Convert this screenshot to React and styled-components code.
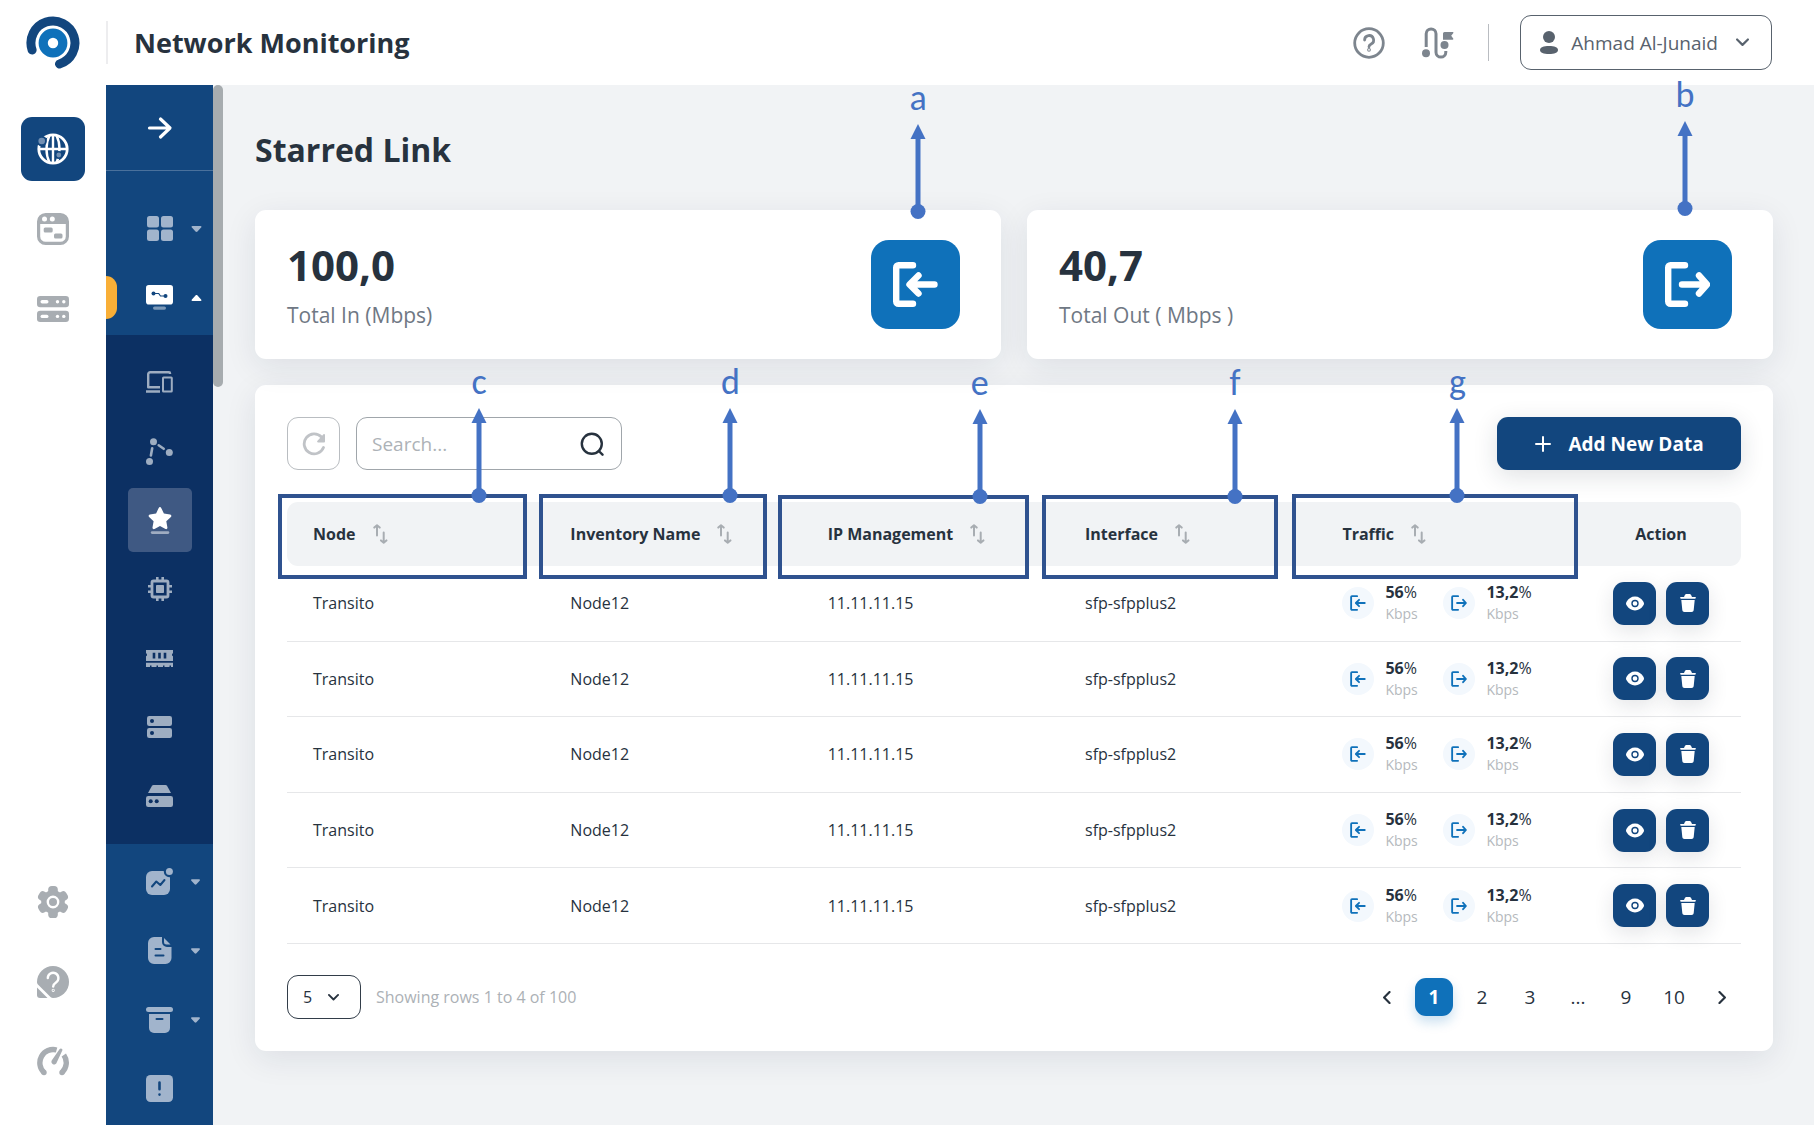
import React, { useState } from 'react'
import styled, { createGlobalStyle, css } from 'styled-components'

const colors = {
  navy: '#12467e',
  deep: '#0c3063',
  blue: '#0f71ba',
  page: '#f1f3f5',
  ink: '#27323e',
  muted: '#6f7884',
  faint: '#a8adb2',
  navIcon: '#a1b4cc',
  subIcon: '#9eadc1',
  marker: '#4472c4',
  frame: '#2f528f',
}

const GlobalStyle = createGlobalStyle`
  *, *::before, *::after {
    box-sizing: border-box;
  }
  body {
    margin: 0;
    background: ${colors.page};
    color: ${colors.ink};
    font-family: 'Open Sans', 'Noto Sans', sans-serif;
    font-size: 16px;
  }
  button, input, select {
    font: inherit;
    color: inherit;
  }
  button {
    border: 0;
    padding: 0;
    background: none;
    cursor: pointer;
  }
  svg {
    display: block;
    flex: none;
  }
`

/* layout */

const Page = styled.div`
  display: flex;
  flex-direction: column;
  min-height: 100vh;
`

const Header = styled.header`
  display: flex;
  align-items: center;
  height: 85px;
  padding-right: 42px;
  background: #fff;
`

const LogoLink = styled.a`
  display: flex;
  justify-content: center;
  width: 106px;
`

const AppName = styled.h1`
  display: flex;
  align-items: center;
  height: 43px;
  margin: 0 auto 0 0;
  padding-left: 26px;
  border-left: 2px solid #ededef;
  font-size: 27px;
  font-weight: 700;
`

const HeaderTools = styled.div`
  display: flex;
  align-items: center;
  gap: 37px;
  color: #7d858e;
`

const UserButton = styled.button`
  display: flex;
  align-items: center;
  height: 55px;
  padding: 0 22px 0 19px;
  margin-left: 31px;
  border: 1px solid #58626d;
  border-radius: 11px;
  color: #58626d;
  font-size: 19px;

  span {
    margin: 0 18px 0 13px;
  }
`

const Divider = styled.i`
  width: 1px;
  height: 37px;
  margin-left: 34px;
  background: #b9bcc1;
`

const Body = styled.div`
  display: flex;
  flex: 1;
`

const Rail = styled.nav`
  display: flex;
  flex-direction: column;
  align-items: center;
  gap: 16px;
  width: 106px;
  padding: 32px 0 31px;
  background: #fff;
`

const RailButton = styled.button`
  display: grid;
  place-items: center;
  width: 64px;
  height: 64px;
  border-radius: 11px;
  color: ${(props) => (props.$active ? '#fff' : colors.faint)};
  background: ${(props) => (props.$active ? colors.navy : 'none')};
`

const RailSpacer = styled.div`
  flex: 1;
`

const Nav = styled.nav`
  width: 107px;
  background: ${colors.navy};
`

const ExpandButton = styled.button`
  display: grid;
  place-items: center;
  width: 100%;
  height: 86px;
  border-bottom: 1px solid #4a719c;
`

const NavGroup = styled.div`
  padding-top: ${(props) => (props.$first ? '23px' : '3px')};
  padding-bottom: ${(props) => (props.$first ? '3px' : '0')};
`

const NavButton = styled.button`
  display: grid;
  grid-template-columns: 40px 27px 1fr;
  align-items: center;
  width: 100%;
  height: 69px;
  color: ${(props) => (props.$active ? '#fff' : colors.navIcon)};

  svg {
    justify-self: center;
  }
  svg + svg {
    justify-self: start;
    margin-left: 18px;
  }
`

const ActiveMark = styled.i`
  width: 11px;
  height: 43px;
  border-radius: 0 11px 11px 0;
  background: ${(props) => (props.$on ? '#f9af37' : 'none')};
`

const SubNav = styled.div`
  display: flex;
  flex-direction: column;
  align-items: center;
  gap: 5px;
  padding: 15px 0 16px;
  background: ${colors.deep};
`

const SubButton = styled.button`
  display: grid;
  place-items: center;
  width: 64px;
  height: 64px;
  border-radius: 5px;
  color: ${(props) => (props.$active ? '#fff' : colors.subIcon)};
  background: ${(props) => (props.$active ? '#3f5983' : 'none')};
`

const ScrollTrack = styled.div`
  width: 10px;
`

const ScrollThumb = styled.div`
  width: 10px;
  height: 302px;
  border-radius: 5px;
  background: #a7acaf;
`

const Main = styled.main`
  flex: 1;
  min-width: 0;
  padding: 41px 41px 41px 32px;
`

const PageTitle = styled.h2`
  margin: 0 0 36px;
  font-size: 32px;
  line-height: 48px;
  font-weight: 700;
`

const Surface = styled.section`
  border-radius: 11px;
  background: #fff;
  box-shadow: 0 8px 32px rgba(24, 36, 64, 0.09);
`

const Cards = styled.div`
  display: grid;
  grid-template-columns: 1fr 1fr;
  gap: 26px;
  margin-bottom: 26px;
`

const Card = styled(Surface)`
  position: relative;
  display: flex;
  align-items: center;
  justify-content: space-between;
  height: 149px;
  padding: 0 41px 0 32px;
`

const Figure = styled.strong`
  display: block;
  font-size: 42px;
  line-height: 56px;
`

const Caption = styled.span`
  display: block;
  margin-top: 4px;
  color: ${colors.muted};
  font-size: 21px;
  line-height: 36px;
`

const CardIcon = styled.div`
  display: grid;
  place-items: center;
  width: 89px;
  height: 89px;
  border-radius: 18px;
  color: #fff;
  background: ${colors.blue};
`

const Panel = styled(Surface)`
  padding: 32px;
`

const Toolbar = styled.div`
  display: flex;
  gap: 16px;
  margin-bottom: 32px;
`

const RefreshButton = styled.button`
  display: grid;
  place-items: center;
  width: 53px;
  height: 53px;
  border: 1px solid #b9bdc1;
  border-radius: 11px;
  color: #c0c3c7;
`

const SearchBox = styled.label`
  display: flex;
  align-items: center;
  width: 266px;
  height: 53px;
  padding: 0 17px 0 15px;
  border: 1px solid #a0a6ab;
  border-radius: 11px;

  input {
    flex: 1;
    min-width: 0;
    padding: 0;
    border: 0;
    outline: 0;
    background: none;
    font-size: 19px;
  }
  input::placeholder {
    color: #adb2b7;
    opacity: 1;
  }
`

const AddButton = styled.button`
  display: flex;
  align-items: center;
  justify-content: center;
  gap: 16px;
  width: 244px;
  height: 53px;
  margin-left: auto;
  border-radius: 11px;
  color: #fff;
  background: ${colors.navy};
  box-shadow: 0 6px 24px rgba(30, 40, 60, 0.14);
  font-size: 19px;
  font-weight: 700;
`

/* table */

const Table = styled.table`
  width: 100%;
  height: 442px;
  table-layout: fixed;
  border-collapse: separate;
  border-spacing: 0;
`

const HeadCell = styled.th`
  position: relative;
  width: ${(props) => props.$width};
  height: 64px;
  padding: ${(props) => (props.$center ? '0' : '0 0 0 26px')};
  background: ${colors.page};
  font-weight: 700;
  text-align: ${(props) => (props.$center ? 'center' : 'left')};

  &:first-child {
    border-radius: 11px 0 0 11px;
  }
  &:last-child {
    border-radius: 0 11px 11px 0;
  }
`

const SortButton = styled.button`
  display: flex;
  align-items: center;
  gap: 17px;
  font-weight: 700;

  svg {
    color: ${colors.faint};
  }
`

const Cell = styled.td`
  padding: 0 0 0 26px;
  border-bottom: 1px solid #e6e7e9;
`

const ActionCell = styled(Cell)`
  padding: 0;
`

const Traffic = styled.div`
  display: grid;
  grid-template-columns: 101px 101px;
`

const Rate = styled.div`
  display: flex;
  align-items: center;
  gap: 11px;
  line-height: 22px;

  small {
    display: block;
    color: #b5b9bd;
    font-size: 14px;
    line-height: 22px;
  }
`

const RateIcon = styled.i`
  display: grid;
  place-items: center;
  width: 32px;
  height: 32px;
  border-radius: 50%;
  color: ${colors.blue};
  background: #f3f8fd;
`

const Actions = styled.div`
  display: flex;
  justify-content: center;
  gap: 10px;
`

const ActionButton = styled.button`
  display: grid;
  place-items: center;
  width: 43px;
  height: 43px;
  border-radius: 11px;
  color: #fff;
  background: ${colors.navy};
  box-shadow: 0 6px 20px rgba(30, 40, 60, 0.12);
`

const Footer = styled.footer`
  display: flex;
  align-items: center;
  margin-top: 31px;
`

const SelectBox = styled.div`
  display: grid;
  align-items: center;
  width: 74px;
  height: 44px;

  select,
  svg {
    grid-area: 1 / 1;
  }
  select {
    width: 100%;
    height: 100%;
    padding: 0 0 0 15px;
    border: 1px solid #323d49;
    border-radius: 11px;
    background: none;
    appearance: none;
  }
  svg {
    margin-left: 41px;
    pointer-events: none;
  }
`

const Showing = styled.span`
  margin-left: 15px;
  color: #acb1b6;
`

const Pager = styled.nav`
  display: flex;
  align-items: center;
  gap: 10px;
  margin-left: auto;
  font-size: 19px;
`

const PageButton = styled.button`
  display: grid;
  place-items: center;
  width: 38px;
  height: 38px;
  border-radius: 11px;

  ${(props) =>
    props.$active &&
    css`
      color: #fff;
      background: ${colors.blue};
      box-shadow: 0 6px 12px rgba(15, 113, 186, 0.22);
      font-weight: 700;
    `}
`

/* callouts drawn over the screen */

const Frame = styled.div`
  position: absolute;
  z-index: 2;
  top: ${(props) => props.$top}px;
  bottom: -13px;
  left: ${(props) => props.$left}px;
  width: ${(props) => props.$width}px;
  border: 4px solid ${colors.frame};
`

const CalloutBox = styled.div`
  position: absolute;
  z-index: 3;
  bottom: calc(100% - ${(props) => props.$drop}px);
  left: ${(props) => (props.$left ? `${props.$left}px` : 'auto')};
  right: ${(props) => (props.$right ? `${props.$right}px` : 'auto')};
  display: flex;
  flex-direction: column;
  align-items: center;
  gap: 5px;
  width: 16px;
  color: ${colors.marker};
  font-family: Carlito, Lato, sans-serif;
  font-size: 36px;
  font-weight: 400;
  line-height: 42px;
`

/* icons */

const line = { fill: 'none', stroke: 'currentColor', strokeLinecap: 'round', strokeLinejoin: 'round' }

const Logo = () => (
  <svg width="54" height="54" viewBox="0 0 54 54">
    <path d="M6.1 34A22 22 0 1 1 33.5 48" fill="none" stroke={colors.navy} strokeWidth="9" strokeLinecap="round" />
    <circle cx="27" cy="27" r="9.8" fill="none" stroke={colors.blue} strokeWidth="9.2" />
  </svg>
)

const HelpIcon = () => (
  <svg width="32" height="32" viewBox="0 0 32 32" {...line} strokeWidth="2.8">
    <circle cx="16" cy="16" r="14.3" />
    <path d="M11.6 13a4.5 4.5 0 1 1 6.6 4c-1.500.8-2.200 1.400-2.200 2.800" />
    <circle cx="16" cy="22.800" r=".5" />
  </svg>
)

const RouteIcon = () => (
  <svg width="32" height="32" viewBox="0 0 32 32">
    <path d="M4.200 20V6.800a4.900 4.900 0 0 1 9.800 0v18.400a4.900 4.900 0 0 0 9.800 0V24" fill="none" stroke="currentColor" strokeWidth="3" />
    <circle cx="4" cy="26.300" r="4" fill="currentColor" />
    <circle cx="22.500" cy="18" r="4" fill="currentColor" />
    <path d="M21 6.500A1.500 1.500 0 0 1 22.500 5h8.200c.8 0 .9.700.5 1.200l-2 2.600 2 2.800c.4.600.1 1.200-.6 1.200H21z" fill="currentColor" />
  </svg>
)

const UserIcon = () => (
  <svg width="18" height="23" viewBox="0 0 18 23" fill="currentColor">
    <circle cx="9" cy="6" r="6" />
    <path d="M9 15c5.400 0 9 1.400 9 3.900S14.400 23 9 23s-9-1.600-9-4.100S3.600 15 9 15z" />
  </svg>
)

const Chevron = ({ size = 12, rotate = 0, stroke = 2 }) => (
  <svg width={size} height={size} viewBox="0 0 12 12" {...line} strokeWidth={stroke}>
    <path d="M1 3.200l5 5 5-5" transform={`rotate(${rotate} 6 6)`} />
  </svg>
)

const GlobeIcon = () => (
  <svg width="32" height="32" viewBox="0 0 32 32">
    <g fill="none" stroke="currentColor" strokeWidth="2.800">
      <circle cx="16" cy="16" r="14.200" />
      <path d="M2 16h28M16 2v28M12.500 2.500c-4 8-4 19 0 27M19.500 2.500c4 8 4 19 0 27" strokeWidth="2.400" />
    </g>
    <circle cx="4.700" cy="8" r="5.200" fill={colors.navy} />
    <circle cx="4.700" cy="8" r="3.300" fill="#718fb2" />
    <circle cx="21.800" cy="22" r="4" fill={colors.navy} />
    <circle cx="21.800" cy="22" r="2.400" fill="#718fb2" />
  </svg>
)

const WindowIcon = () => (
  <svg width="32" height="32" viewBox="0 0 32 32" fill="currentColor">
    <rect x="1.600" y="1.600" width="28.800" height="28.800" rx="7" fill="none" stroke="currentColor" strokeWidth="3.200" />
    <path d="M1 11V8a7 7 0 0 1 7-7h16a7 7 0 0 1 7 7v3z" />
    <circle cx="7.500" cy="6" r="2.500" fill="#fff" />
    <circle cx="15.300" cy="6" r="2.500" fill="#fff" />
    <rect x="6.700" y="14.500" width="9" height="5" rx="1.500" />
    <rect x="17" y="20.500" width="8.500" height="5" rx="1.500" />
  </svg>
)

const RackIcon = () => (
  <svg width="32" height="26" viewBox="0 0 32 26" fill="currentColor">
    {[0, 14.7].map((y) => (
      <g key={y} transform={`translate(0 ${y})`}>
        <rect width="32" height="11.300" rx="3.200" />
        <g fill="#fff">
          <rect x="3.500" y="4" width="8" height="3.400" rx="1.700" />
          <circle cx="20.500" cy="5.700" r="1.700" />
          <circle cx="26.800" cy="5.700" r="1.700" />
        </g>
      </g>
    ))}
  </svg>
)

const GearIcon = () => (
  <svg width="32" height="32" viewBox="0 0 32 32" fill="currentColor">
    <circle cx="16" cy="16" r="11.800" />
    {[0, 60, 120].map((angle) => (
      <rect key={angle} x="11.200" y="0" width="9.600" height="32" rx="3.600" transform={`rotate(${angle} 16 16)`} />
    ))}
    <circle cx="16" cy="16" r="5.200" fill="none" stroke="#fff" strokeWidth="2.400" />
  </svg>
)

const SupportIcon = () => (
  <svg width="32" height="32" viewBox="0 0 32 32">
    <path d="M16 0a16 16 0 0 1 0 32c-1 0-1.700-.3-2.500-1L1.200 18.800C.4 18 0 17.200 0 16A16 16 0 0 1 16 0z" fill="currentColor" />
    <path d="M0 21.500L10.500 32H3a3 3 0 0 1-3-3z" fill="currentColor" />
    <g {...line} stroke="#fff" strokeWidth="2.400">
      <path d="M10.800 12a5.300 5.300 0 1 1 8.200 4.500c-1.800 1.200-2.800 2-2.800 4" />
      <circle cx="16.200" cy="24.300" r=".4" />
    </g>
  </svg>
)

const GaugeIcon = () => (
  <svg width="32" height="32" viewBox="0 0 32 32">
    <g fill="none" stroke="currentColor" strokeWidth="5.400">
      <path d="M7 26.500A13.300 13.300 0 0 1 19.600 4" />
      <path d="M26.800 9A13.300 13.300 0 0 1 25 26.500" />
    </g>
    <circle cx="7" cy="26.500" r="2.700" fill="currentColor" />
    <circle cx="25" cy="26.500" r="2.700" fill="currentColor" />
    <path d="M22.500 3.300c.9-1.500 3.300-.8 2.900 1L19.500 17c-1.500 3-6.300 1-4.800-2.500z" fill="currentColor" />
  </svg>
)

const ArrowIcon = () => (
  <svg width="26" height="24" viewBox="0 0 26 24" {...line} stroke="#fff" strokeWidth="3.200">
    <path d="M2.500 12h20M13.500 3l9.500 9-9.500 9" />
  </svg>
)

const Caret = ({ up, small }) => (
  <svg width={small ? 9 : 11} height="6" viewBox="0 0 10 6" fill="currentColor">
    <path d="M1 0h8c1 0 1.300.9.600 1.600L6 5.500c-.6.600-1.400.6-2 0L.4 1.600C-.3.9 0 0 1 0z" transform={up ? 'rotate(180 5 3)' : undefined} />
  </svg>
)

const GridIcon = () => (
  <svg width="26" height="25" viewBox="0 0 26 25" fill="currentColor">
    <rect width="12" height="11.500" rx="2.500" />
    <rect x="14" width="12" height="11.500" rx="2.500" />
    <rect y="13.500" width="12" height="11.500" rx="2.500" />
    <rect x="14" y="13.500" width="12" height="11.500" rx="2.500" />
  </svg>
)

const MonitorIcon = () => (
  <svg width="27" height="25" viewBox="0 0 27 25" fill="currentColor">
    <rect width="27" height="19.500" rx="2.800" />
    <g fill={colors.navy}>
      <circle cx="7.500" cy="8.500" r="2" />
      <circle cx="19.500" cy="11" r="2" />
      <path d="M7.500 8.500h5.200l1.800 2.500h5" fill="none" stroke={colors.navy} strokeWidth="1.200" />
    </g>
    <rect x="7" y="21.500" width="13" height="3.200" rx="1.600" opacity=".45" />
  </svg>
)

const DevicesIcon = () => (
  <svg width="27" height="22" viewBox="0 0 27 22" {...line} strokeWidth="2.400" strokeLinecap="butt">
    <path d="M24 3V2.200a1 1 0 0 0-1-1H4.200a2 2 0 0 0-2 2V16.200H14M0 20.500h14" />
    <rect x="17" y="6.500" width="8.800" height="14" rx=".6" strokeWidth="2" />
  </svg>
)

const TopologyIcon = () => (
  <svg width="27" height="27" viewBox="0 0 27 27" fill="currentColor">
    <circle cx="7.500" cy="3.700" r="3.500" />
    <circle cx="23.300" cy="14.500" r="3.500" />
    <circle cx="3.500" cy="23.500" r="3.500" />
    <path d="M12.700 7.300l5 3.500M6.200 10.200l-1.300 7.200" {...line} strokeWidth="2.600" />
  </svg>
)

const StarIcon = () => (
  <svg width="24" height="27" viewBox="0 0 24 27" fill="currentColor">
    <path d="M10.700.9c.5-1.100 2-1.100 2.500 0l2.700 5.700 6.200.9c1.200.2 1.700 1.600.8 2.400l-4.600 4.400 1.100 6.300c.2 1.100-.9 1.900-1.900 1.400L12 19l-5.500 3c-1 .5-2.200-.3-2-1.400l1.100-6.300L1.100 9.900C.2 9.100.7 7.700 1.900 7.500l6.200-.9z" />
    <rect x="2.800" y="24.300" width="18.500" height="2.600" rx="1.300" opacity=".5" />
  </svg>
)

const ChipIcon = () => (
  <svg width="24" height="24" viewBox="0 0 24 24" fill="currentColor">
    <rect x="4" y="4" width="16" height="16" rx="1.500" fill="none" stroke="currentColor" strokeWidth="2.800" />
    <rect x="8" y="8" width="8" height="8" rx=".8" />
    <path d="M9.300 0v4M14.700 0v4M9.300 20v4M14.700 20v4M0 9.300h4M0 14.700h4M20 9.300h4M20 14.700h4" stroke="currentColor" strokeWidth="2.600" />
  </svg>
)

const MemoryIcon = () => (
  <svg width="27" height="17" viewBox="0 0 27 17" fill="currentColor">
    <path d="M0 0h27v3.200a1.600 1.600 0 0 0 0 3V11H0V6.200a1.600 1.600 0 0 0 0-3z" />
    <path d="M0 12.800h27V17h-2v-1.500h-1.500V17h-5v-1.500H17V17h-5v-1.500h-1.500V17h-5v-1.500H4V17H0z" />
    <path d="M8 2.700v5.800M13.500 2.700v5.800M19 2.700v5.800" stroke={colors.deep} strokeWidth="2.600" />
  </svg>
)

const StackIcon = () => (
  <svg width="25" height="22" viewBox="0 0 25 22" fill="currentColor">
    <rect width="25" height="10" rx="2.200" />
    <rect y="12" width="25" height="10" rx="2.200" />
    <circle cx="5" cy="5" r="2" fill={colors.deep} />
    <circle cx="5" cy="17" r="2" fill={colors.deep} />
  </svg>
)

const DriveIcon = () => (
  <svg width="27" height="22" viewBox="0 0 27 22" fill="currentColor">
    <path d="M7.500 0h12c.7 0 1.200.3 1.500.8L25 8H2L6 .8C6.300.3 6.800 0 7.500 0z" />
    <rect y="11" width="27" height="11" rx="2.200" />
    <circle cx="4.700" cy="16.300" r="2" fill={colors.deep} />
    <circle cx="10.700" cy="16.300" r="2" fill={colors.deep} />
  </svg>
)

const ChartIcon = () => (
  <svg width="27" height="27" viewBox="0 0 27 27" fill="currentColor">
    <rect y="3" width="24" height="24" rx="6" />
    <circle cx="23.400" cy="3.600" r="5.600" fill={colors.navy} />
    <circle cx="23.400" cy="3.600" r="3.500" />
    <path d="M6 18.500l4.300-5 4 3.500 4.200-5" {...line} stroke={colors.navy} strokeWidth="2" />
  </svg>
)

const DocIcon = () => (
  <svg width="24" height="27" viewBox="0 0 24 27" fill="currentColor">
    <path d="M6 0h8v5a5 5 0 0 0 5 5h4.500v11a6 6 0 0 1-6 6H6a6 6 0 0 1-6-6V6a6 6 0 0 1 6-6z" />
    <path d="M16 1l6.500 6.500H18.500A2.500 2.500 0 0 1 16 5z" />
    <path d="M7.500 12h5M7.500 18.500h8" {...line} stroke={colors.navy} strokeWidth="2" />
  </svg>
)

const ArchiveIcon = () => (
  <svg width="27" height="26" viewBox="0 0 27 26" fill="currentColor">
    <rect width="27" height="5" rx="2.500" />
    <path d="M3 7h21v14a5 5 0 0 1-5 5H8a5 5 0 0 1-5-5z" />
    <path d="M10.500 12h6" {...line} stroke={colors.navy} strokeWidth="2" />
  </svg>
)

const AlertIcon = () => (
  <svg width="27" height="27" viewBox="0 0 27 27">
    <rect width="27" height="27" rx="4.500" fill="currentColor" />
    <path d="M13.500 7.500v6.800M13.500 19.500v.1" {...line} stroke={colors.navy} strokeWidth="2.600" />
  </svg>
)

const InIcon = ({ size, stroke = 6.4 }) => (
  <svg width={size} height={size} viewBox="0 0 45 45" {...line} strokeWidth={stroke}>
    <path d="M20 3.200H5.500a2.300 2.300 0 0 0-2.300 2.300v34a2.300 2.300 0 0 0 2.300 2.300H20" />
    <path d="M41.500 22.500H17M25.500 13.500l-9 9 9 9" />
  </svg>
)

const OutIcon = ({ size, stroke = 6.4 }) => (
  <svg width={size} height={size} viewBox="0 0 45 45" {...line} strokeWidth={stroke}>
    <path d="M20 3.200H5.500a2.300 2.300 0 0 0-2.300 2.300v34a2.300 2.300 0 0 0 2.300 2.300H20" />
    <path d="M17 22.500h23.500M34 13.500l8 9-8 9" />
  </svg>
)

const RefreshIcon = () => (
  <svg width="24" height="24" viewBox="0 0 24 24">
    <path d="M21.500 15.500A10 10 0 1 1 19.500 5" fill="none" stroke="currentColor" strokeWidth="2.800" strokeLinecap="round" />
    <path d="M21.500 2.200c.7-.6 1.500-.2 1.500.7V9.500c0 .6-.3.900-.9.900h-6c-1 0-1.300-1-.6-1.600z" fill="currentColor" />
  </svg>
)

const SearchIcon = () => (
  <svg width="24" height="24" viewBox="0 0 24 24" {...line} strokeWidth="2.400">
    <circle cx="11.800" cy="11.800" r="10" />
    <path d="M18.800 19l3.700 3.700" />
  </svg>
)

const PlusIcon = () => (
  <svg width="18" height="18" viewBox="0 0 18 18" {...line} strokeWidth="2">
    <path d="M9 2v14M2 9h14" />
  </svg>
)

const SortIcon = () => (
  <svg width="15" height="20" viewBox="0 0 15 20" {...line} strokeWidth="2">
    <path d="M4 11.500V2M1.300 3.600L4 1.300l2.700 2.300M10.700 8.500V18M8 16.400l2.700 2.300 2.700-2.300" />
  </svg>
)

const EyeIcon = () => (
  <svg width="18" height="15" viewBox="0 0 18 14">
    <path d="M9 0c3.600 0 6.500 2 8.400 5.200.8 1.200.8 2.400 0 3.600C15.500 12 12.600 14 9 14S2.500 12 .6 8.800c-.8-1.200-.8-2.400 0-3.600C2.500 2 5.400 0 9 0z" fill="currentColor" />
    <circle cx="9" cy="7" r="3" fill="none" stroke={colors.navy} strokeWidth="1.400" />
  </svg>
)

const TrashIcon = () => (
  <svg width="16" height="18" viewBox="0 0 16 18" fill="currentColor">
    <path d="M1 3h3l.9-1.900C5.300.4 5.700 0 6.500 0h3c.8 0 1.200.4 1.600 1.100L12 3h3c1.300 0 1.300 1.700 0 1.700H1C-.3 4.700-.3 3 1 3z" />
    <path d="M1.300 6h13.400l-1 10c-.1 1.200-.9 2-2.200 2h-7c-1.300 0-2.100-.8-2.200-2z" />
  </svg>
)

const Callout = ({ label, ...position }) => (
  <CalloutBox {...position}>
    {label}
    <svg width="16" height="95" viewBox="0 0 16 95" fill="currentColor">
      <path d="M8 0l7.500 15h-15z" />
      <path d="M5.500 14h5v72h-5z" />
      <circle cx="8" cy="87.500" r="7.500" />
    </svg>
  </CalloutBox>
)

/* data */

const columns = [
  { name: 'Node', width: '17.7%', label: 'c', top: -8, left: -9, frame: 249, arrow: 189 },
  { name: 'Inventory Name', width: '17.7%', label: 'd', top: -8, left: -5, frame: 228, arrow: 179 },
  { name: 'IP Management', width: '17.7%', label: 'e', top: -7, left: -24, frame: 251, arrow: 190 },
  { name: 'Interface', width: '17.7%', label: 'f', top: -7, left: -17, frame: 236, arrow: 181 },
  { name: 'Traffic', width: 'auto', label: 'g', top: -8, left: -24, frame: 286, arrow: 153 },
]

const rows = Array.from({ length: 5 }, (_, id) => ({
  id,
  node: 'Transito',
  inventory: 'Node12',
  ip: '11.11.11.15',
  port: 'sfp-sfpplus2',
  rateIn: '56',
  rateOut: '13,2',
}))

const subItems = [
  ['Devices', DevicesIcon],
  ['Topology', TopologyIcon],
  ['Starred link', StarIcon],
  ['Processor', ChipIcon],
  ['Memory', MemoryIcon],
  ['Servers', StackIcon],
  ['Storage', DriveIcon],
]

const moreItems = [
  ['Statistics', ChartIcon, true],
  ['Reports', DocIcon, true],
  ['Archive', ArchiveIcon, true],
  ['Alerts', AlertIcon, false],
]

const Sidebar = () => (
  <>
    <Rail aria-label="Applications">
      <RailButton $active aria-label="Network">
        <GlobeIcon />
      </RailButton>
      <RailButton aria-label="Applications">
        <WindowIcon />
      </RailButton>
      <RailButton aria-label="Servers">
        <RackIcon />
      </RailButton>
      <RailSpacer />
      <RailButton aria-label="Settings">
        <GearIcon />
      </RailButton>
      <RailButton aria-label="Support">
        <SupportIcon />
      </RailButton>
      <RailButton aria-label="Performance">
        <GaugeIcon />
      </RailButton>
    </Rail>
    <Nav aria-label="Network monitoring">
      <ExpandButton aria-label="Expand menu">
        <ArrowIcon />
      </ExpandButton>
      <NavGroup $first>
        <NavButton aria-label="Dashboard">
          <ActiveMark />
          <GridIcon />
          <Caret />
        </NavButton>
        <NavButton $active aria-label="Monitoring">
          <ActiveMark $on />
          <MonitorIcon />
          <Caret up />
        </NavButton>
      </NavGroup>
      <SubNav>
        {subItems.map(([name, Icon]) => (
          <SubButton key={name} aria-label={name} $active={name === 'Starred link'}>
            <Icon />
          </SubButton>
        ))}
      </SubNav>
      <NavGroup>
        {moreItems.map(([name, Icon, hasMenu]) => (
          <NavButton key={name} aria-label={name}>
            <ActiveMark />
            <Icon />
            {hasMenu && <Caret small />}
          </NavButton>
        ))}
      </NavGroup>
    </Nav>
    <ScrollTrack>
      <ScrollThumb />
    </ScrollTrack>
  </>
)

const App = () => {
  const [query, setQuery] = useState('')
  const [pageSize, setPageSize] = useState('5')
  const [page, setPage] = useState(1)

  return (
    <Page>
      <GlobalStyle />
      <Header>
        <LogoLink href="#" aria-label="Home">
          <Logo />
        </LogoLink>
        <AppName>Network Monitoring</AppName>
        <HeaderTools>
          <button aria-label="Help">
            <HelpIcon />
          </button>
          <button aria-label="Guided tour">
            <RouteIcon />
          </button>
        </HeaderTools>
        <Divider />
        <UserButton>
          <UserIcon />
          <span>Ahmad Al-Junaid</span>
          <Chevron size={13} />
        </UserButton>
      </Header>
      <Body>
        <Sidebar />
        <Main>
          <PageTitle>Starred Link</PageTitle>
          <Cards>
            <Card>
              <div>
                <Figure>100,0</Figure>
                <Caption>Total In (Mbps)</Caption>
              </div>
              <CardIcon>
                <InIcon size={45} />
              </CardIcon>
              <Callout label="a" $right={75} $drop={9} />
            </Card>
            <Card>
              <div>
                <Figure>40,7</Figure>
                <Caption>Total Out ( Mbps )</Caption>
              </div>
              <CardIcon>
                <OutIcon size={45} />
              </CardIcon>
              <Callout label="b" $right={80} $drop={6} />
            </Card>
          </Cards>
          <Panel>
            <Toolbar>
              <RefreshButton aria-label="Refresh">
                <RefreshIcon />
              </RefreshButton>
              <SearchBox>
                <input
                  aria-label="Search"
                  placeholder="Search..."
                  value={query}
                  onChange={(e) => setQuery(e.target.value)}
                />
                <SearchIcon />
              </SearchBox>
              <AddButton>
                <PlusIcon />
                Add New Data
              </AddButton>
            </Toolbar>
            <Table>
              <thead>
                <tr>
                  {columns.map((column) => (
                    <HeadCell key={column.name} $width={column.width}>
                      <SortButton>
                        {column.name}
                        <SortIcon />
                      </SortButton>
                      <Frame $top={column.top} $left={column.left} $width={column.frame}>
                        <Callout label={column.label} $left={column.arrow} $drop={5} />
                      </Frame>
                    </HeadCell>
                  ))}
                  <HeadCell $center $width="160px">
                    Action
                  </HeadCell>
                </tr>
              </thead>
              <tbody>
                {rows.map((row) => (
                  <tr key={row.id}>
                    <Cell>{row.node}</Cell>
                    <Cell>{row.inventory}</Cell>
                    <Cell>{row.ip}</Cell>
                    <Cell>{row.port}</Cell>
                    <Cell>
                      <Traffic>
                        <Rate>
                          <RateIcon>
                            <InIcon size={16} stroke={5.2} />
                          </RateIcon>
                          <div>
                            <b>{row.rateIn}</b>%<small>Kbps</small>
                          </div>
                        </Rate>
                        <Rate>
                          <RateIcon>
                            <OutIcon size={16} stroke={5.2} />
                          </RateIcon>
                          <div>
                            <b>{row.rateOut}</b>%<small>Kbps</small>
                          </div>
                        </Rate>
                      </Traffic>
                    </Cell>
                    <ActionCell>
                      <Actions>
                        <ActionButton aria-label="View">
                          <EyeIcon />
                        </ActionButton>
                        <ActionButton aria-label="Delete">
                          <TrashIcon />
                        </ActionButton>
                      </Actions>
                    </ActionCell>
                  </tr>
                ))}
              </tbody>
            </Table>
            <Footer>
              <SelectBox>
                <select aria-label="Rows per page" value={pageSize} onChange={(e) => setPageSize(e.target.value)}>
                  <option>5</option>
                  <option>10</option>
                  <option>25</option>
                </select>
                <Chevron size={11} />
              </SelectBox>
              <Showing>Showing rows 1 to 4 of 100</Showing>
              <Pager aria-label="Pages">
                <PageButton aria-label="Previous page">
                  <Chevron size={13} rotate={90} />
                </PageButton>
                {[1, 2, 3, '...', 9, 10].map((item) => (
                  <PageButton
                    key={item}
                    $active={item === page}
                    disabled={item === '...'}
                    onClick={() => setPage(item)}
                  >
                    {item}
                  </PageButton>
                ))}
                <PageButton aria-label="Next page">
                  <Chevron size={13} rotate={-90} />
                </PageButton>
              </Pager>
            </Footer>
          </Panel>
        </Main>
      </Body>
    </Page>
  )
}

export default App
